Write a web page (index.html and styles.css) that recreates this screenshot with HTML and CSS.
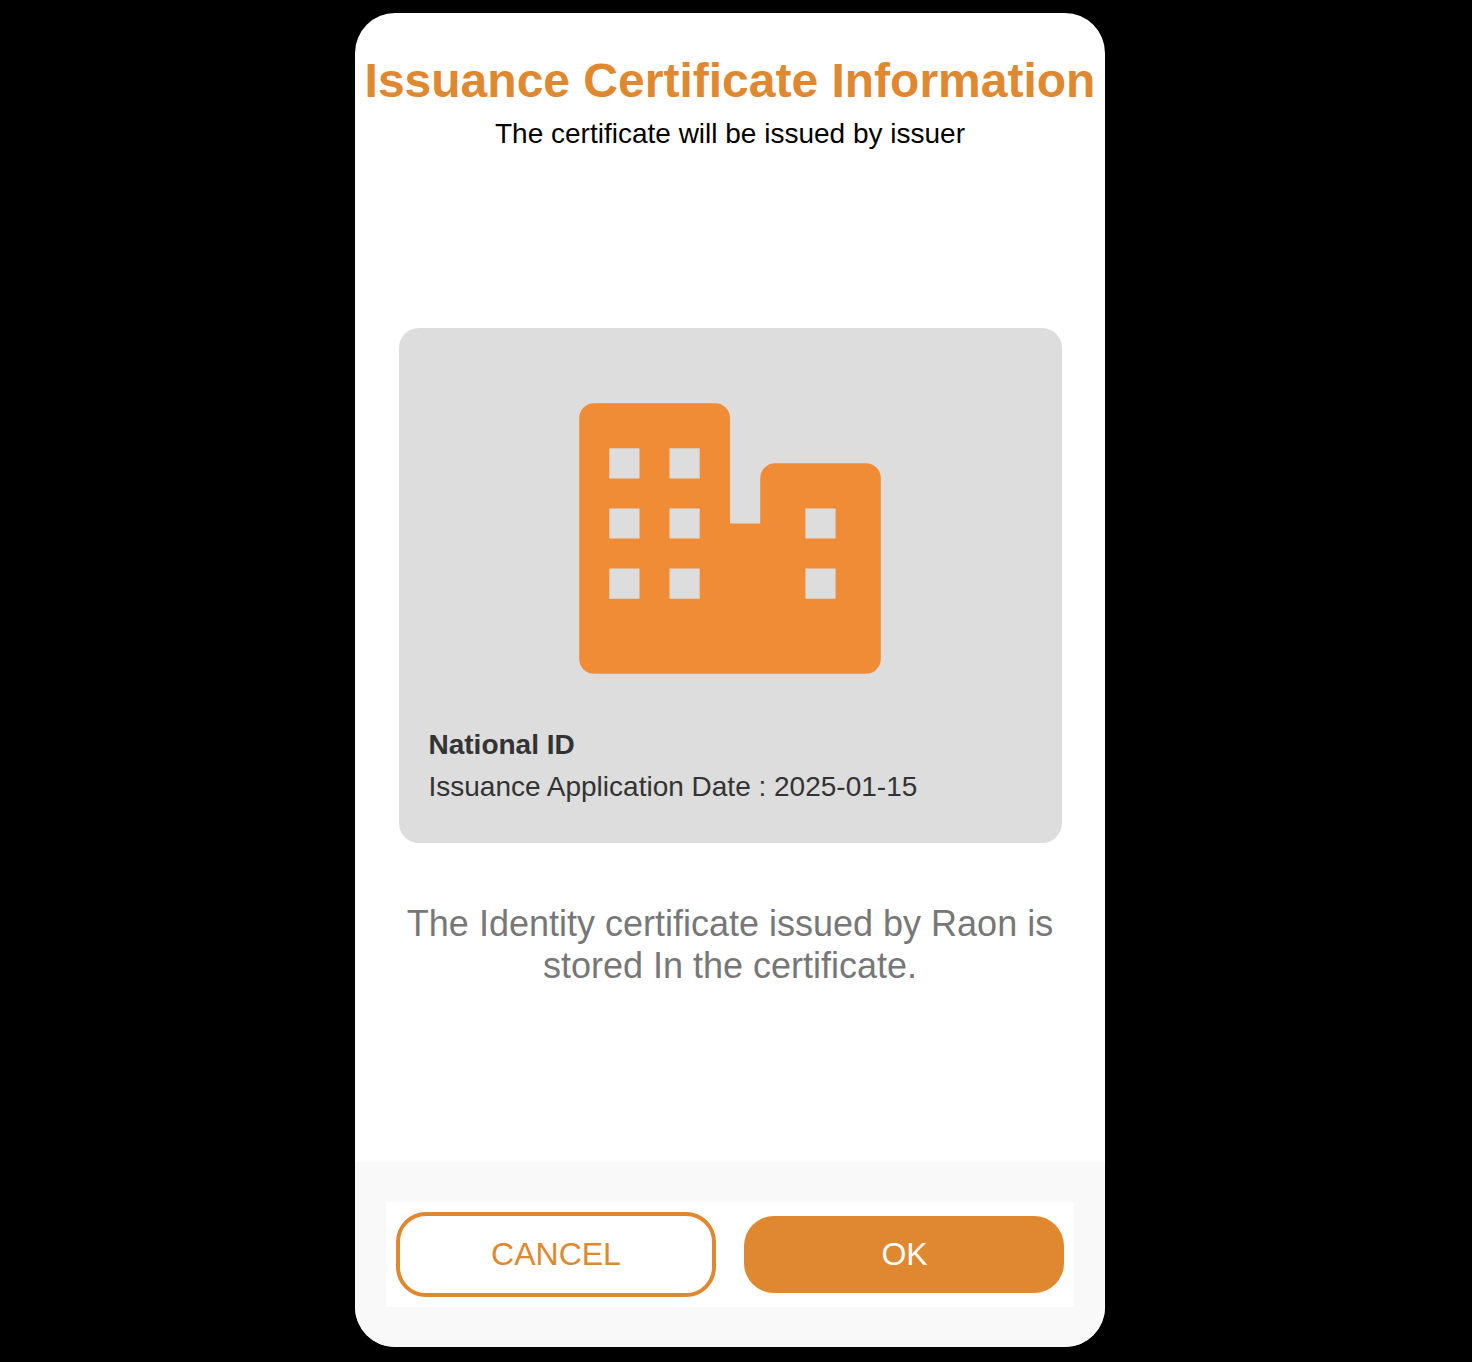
FILE: index.html
```html
<!DOCTYPE html>
<html lang="en">
<head>
<meta charset="utf-8">
<title>Issuance Certificate Information</title>
<link rel="stylesheet" href="styles.css">
</head>
<body>
<main class="phone">
  <header class="header">
    <h1 class="title">Issuance Certificate Information</h1>
    <p class="subtitle">The certificate will be issued by issuer</p>
  </header>
  <section class="content">
    <div class="card">
      <svg class="building" viewBox="0 0 302 271" aria-hidden="true">
        <path fill="#f08c36" fill-rule="evenodd" d="M15.200 .2H136a15 15 0 0 1 15 15V120.400H181.200V75.200a15 15 0 0 1 15-15H286.800a15 15 0 0 1 15 15V255.800a15 15 0 0 1-15 15H15.200a15 15 0 0 1-15-15V15.200a15 15 0 0 1 15-15ZM30.300 45.300v30.200h30.200v-30.200ZM90.500 45.300v30.200h30.200v-30.200ZM30.300 105.400v30.200h30.200v-30.200ZM90.500 105.400v30.200h30.200v-30.200ZM30.300 165.500v30.200h30.200v-30.200ZM90.500 165.500v30.200h30.200v-30.200ZM226.400 105.400v30.200h30.200v-30.200ZM226.400 165.500v30.200h30.200v-30.200Z"/>
      </svg>
      <h2 class="card-title">National ID</h2>
      <p class="card-date">Issuance Application Date : 2025-01-15</p>
    </div>
    <p class="message">The Identity certificate issued by Raon is stored In the certificate.</p>
  </section>
  <footer class="footer">
    <div class="actions">
      <button class="button cancel" type="button">CANCEL</button>
      <button class="button ok" type="button">OK</button>
    </div>
  </footer>
</main>
</body>
</html>
```

FILE: styles.css
```css
* { box-sizing: border-box; }
body {
  margin: 0;
  padding-top: 13px;
  height: 1362px;
  overflow: hidden;
  background: #000;
  font-family: "Liberation Sans", Arial, sans-serif;
}
h1, h2, p { margin: 0; }
.phone {
  display: flex;
  flex-direction: column;
  width: 750px;
  height: 1334px;
  margin-left: 355px;
  border-radius: 40px;
  background: #fff;
  overflow: hidden;
}
.header {
  height: 315px;
  padding-top: 40px;
  text-align: center;
  white-space: nowrap;
}
.title {
  color: #df8830;
  font-size: 48px;
  line-height: 55px;
}
.subtitle {
  margin-top: 10px;
  font-size: 28px;
  line-height: 32px;
}
.content {
  flex: 1;
  padding: 0 43.5px;
}
.card {
  height: 515px;
  padding: 75px 30px 0;
  border-radius: 20px;
  background: #ddd;
  color: #333;
}
.building {
  display: block;
  width: 302px;
  height: 271px;
  margin: 0 auto 55px;
}
.card-title {
  font-size: 28px;
  line-height: 32px;
}
.card-date {
  margin-top: 10px;
  font-size: 28px;
  line-height: 32px;
}
.message {
  margin-top: 60px;
  color: #777;
  font-size: 36px;
  line-height: 42px;
  text-align: center;
}
.footer {
  height: 185px;
  padding: 40px 31px;
  background: #f9f9f9;
}
.actions {
  display: flex;
  align-items: center;
  justify-content: space-between;
  height: 105px;
  padding: 0 10px;
  background: #fff;
}
.button {
  width: 320px;
  height: 77px;
  padding: 0;
  border: 0;
  border-radius: 30px;
  font-family: inherit;
  font-size: 32px;
}
.cancel {
  height: 85px;
  border: 4px solid #df8830;
  background: #fff;
  color: #df8830;
}
.ok {
  padding-left: 1px;
  background: #df8830;
  color: #fff;
}
```
